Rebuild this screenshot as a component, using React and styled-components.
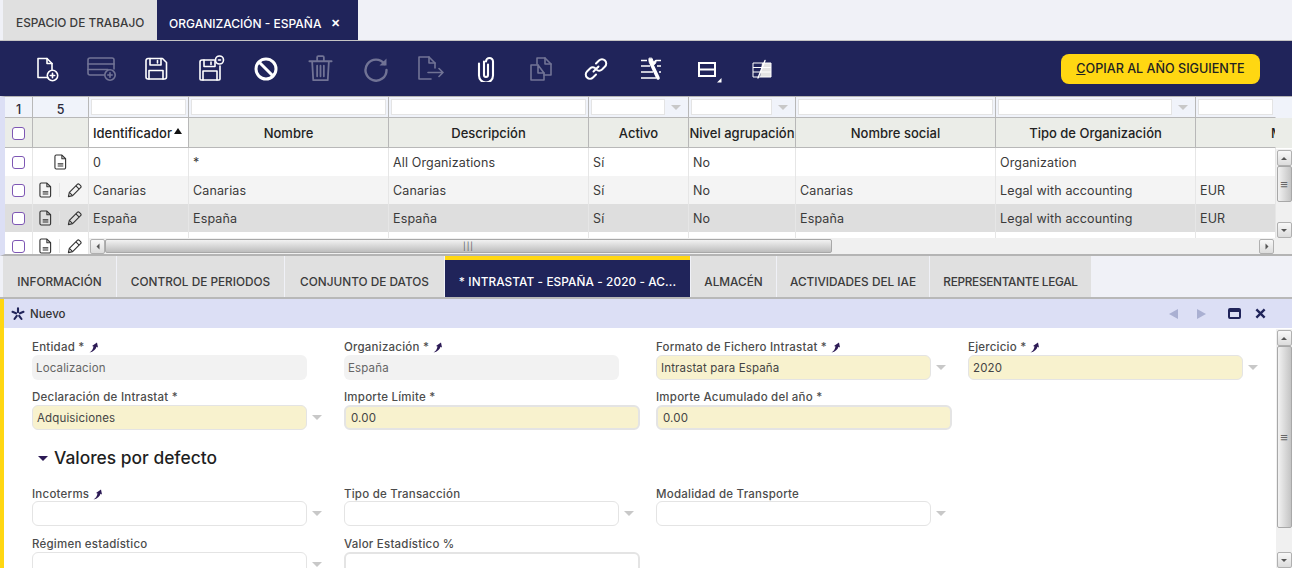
import React from 'react'
import styled, { createGlobalStyle } from 'styled-components'

const NAVY = '#20245a'
const FONT = 'Inter, "Open Sans", sans-serif'

const Global = createGlobalStyle`
  html, body { margin: 0; padding: 0; background: #f0f1f7; }
  body { width: 1292px; height: 568px; overflow: hidden; font-family: ${FONT}; }
  * { box-sizing: border-box; }
`

// ICONS
const Svg = ({ children, size = 26, dim, box = 26 }) => (
  <svg
    width={size}
    height={size}
    viewBox={`0 0 ${box} ${box}`}
    fill="none"
    stroke="#fff"
    strokeWidth="1.6"
    strokeLinejoin="round"
    strokeLinecap="round"
    opacity={dim ? 0.36 : 1}
    style={{ flex: 'none' }}
  >
    {children}
  </svg>
)

const PlusBadge = ({ x, y }) => (
  <>
    <circle cx={x} cy={y} r="5.2" />
    <path d={`M${x - 2.2} ${y}h4.4M${x} ${y - 2.2}v4.4`} />
  </>
)

const icons = [
  <Svg><path d="M15 21.500H5V2.500h9l5 5v6" /><path d="M14 2.500v5h5" /><PlusBadge x={19.500} y={19.500} /></Svg>,
  <Svg dim size={30} box={30}><path d="M18 21H4a2 2 0 0 1-2-2V6a2 2 0 0 1 2-2h22a2 2 0 0 1 2 2v9" /><path d="M2 10h26M2 15.500h20" /><PlusBadge x={24} y={21} /></Svg>,
  <Svg><path d="M5 2.500h14.500l4 4V21a2 2 0 0 1-2 2H5a2 2 0 0 1-2-2V4.500a2 2 0 0 1 2-2z" /><path d="M7 2.500v6.500h11V2.500M14.500 4.500v2.500" /><path d="M6 23v-8.500h14V23" /></Svg>,
  <Svg size={30} box={30}><path d="M18 6H6a2 2 0 0 0-2 2v17a1 1 0 0 0 1 1h18a1 1 0 0 0 1-1V12" /><path d="M8 6v6.500h11V6M15 8v2.500" /><path d="M7 26v-9h14v9" /><circle cx="23.500" cy="6" r="4" /><path d="M22.500 6h2" /></Svg>,
  <Svg><circle cx="13" cy="13" r="10" strokeWidth="3" /><path d="M6 6l14 14" strokeWidth="3" strokeLinecap="butt" /></Svg>,
  <Svg dim size={29} box={26}><path d="M3 6.500h20M10 6.500V3a1 1 0 0 1 1-1h4a1 1 0 0 1 1 1v3.500M5.500 6.500l1 17h13l1-17M10 10.500v9.500M13 10.500v9.500M16 10.500v9.500" /></Svg>,
  <Svg dim><path d="M21.500 8A10.500 10.500 0 1 0 23.500 14" strokeWidth="2.400" /><path d="M23.500 2.500v7h-7z" fill="#fff" stroke="none" /></Svg>,
  <Svg dim size={30} box={30}><path d="M15 25H3V3h10l6 6v5" /><path d="M13 3v6h6" /><path d="M12 18.500h15M23 14.500l4 4-4 4" /></Svg>,
  <Svg><path d="M6 7v12a7 7 0 0 0 14 0V5a3.500 3.500 0 0 0-7 0M11 5v13.500a2 2 0 0 0 4 0V8" strokeWidth="2.100" transform="translate(0 .5)" /></Svg>,
  <Svg dim><path d="M10 9H3v15h13v-7" /><path d="M9 8V2h8l6 6v11h-7" /><path d="M17 2v6h6M10 9l6 8h-6z" /></Svg>,
  <Svg><path d="M10.500 15.500l5-5" strokeWidth="2" /><path d="M13 7.500l3-3a4.200 4.200 0 0 1 6 6l-3 3a4.200 4.200 0 0 1-5 .5" strokeWidth="2" /><path d="M13 18.500l-3 3a4.200 4.200 0 0 1-6-6l3-3a4.200 4.200 0 0 1 5-.5" strokeWidth="2" /></Svg>,
  <Svg>
    <path d="M3 4.500h6M18 4.500h5M3 10h9M19 10h4M3 16h12M21 16h2M3 22h15" strokeWidth="1.300" strokeLinecap="butt" />
    <path d="M13.500 8l6.500 14" strokeWidth="3.600" strokeLinecap="round" />
    <path d="M11 2.500c-.5 3 .5 6 3 6.500s4.500-2 4-5l-2.500 2-1.500-3.500z" fill="#fff" stroke="#fff" strokeWidth="1" />
  </Svg>,
  <Svg size={34} box={34}><path d="M10 11h16v13H10zM10 17.500h16" strokeWidth="2" strokeLinejoin="miter" strokeLinecap="butt" /><path d="M32.500 26v4.500H28z" fill="#fff" stroke="none" /></Svg>,
  <Svg size={24} box={24}><path d="M13 6h9v14H11z" fill="#e4e4e4" stroke="none" /><path d="M4 6h18v14H4zM4 10.500h18M4 15h18" strokeWidth="1" strokeLinecap="butt" /><path d="M16 3.500L9 21" strokeWidth="1.400" /></Svg>,
]

const Doc = () => (
  <svg width="13" height="16" viewBox="0 0 14 17" fill="none" stroke="#333" strokeWidth="1.200" strokeLinejoin="round" style={{ flex: 'none' }}>
    <path d="M2.500 1h6l4 4v9.500a1.500 1.500 0 0 1-1.500 1.500H2.500A1.500 1.500 0 0 1 1 14.500v-12A1.500 1.500 0 0 1 2.500 1z" />
    <path d="M8.500 1v4h4" />
    <path d="M4 10.500h6M4 12.800h6" strokeWidth="1.200" />
  </svg>
)

const Pencil = () => (
  <svg width="15" height="15" viewBox="0 0 16 16" fill="none" stroke="#333" strokeWidth="1.200" strokeLinejoin="round" style={{ flex: 'none' }}>
    <path d="M1.500 14.500l1-4.500 8.500-8.500a1.500 1.500 0 0 1 2.100 0l1.400 1.400a1.500 1.500 0 0 1 0 2.100L6 13.500z" />
    <path d="M2.500 10l3.500 3.500M9.500 3l3.500 3.500" />
  </svg>
)

const Pin = () => (
  <svg width="11" height="11" viewBox="0 0 10 11">
    <path d="M1 10.500C3.500 9 4.500 7 5 4.500L3.500 4 8.500.5 9.500 5.500 8 4.800C7.200 7.500 5 9.800 1 10.500z" fill="#2c1a55" />
  </svg>
)

const Star = () => (
  <svg width="14" height="14" viewBox="0 0 14 14" stroke={NAVY} strokeWidth="2.100" strokeLinecap="round">
    <path d="M7 1.200v4M1.500 4.800L5 6.300M12.500 4.800L9 6.300M3.500 12L5.800 8.800M10.500 12L8.200 8.800" />
  </svg>
)

// TOP TABS
const Page = styled.div`
  width: 1292px;
  height: 568px;
  overflow: hidden;
  display: flex;
  flex-direction: column;
  color: #333;
`
const TopTabs = styled.div`
  display: flex;
  height: 41px;
  padding-left: 3px;
  border-bottom: 1px solid #c4c4c4;
`
const TopTab = styled.div`
  display: flex;
  align-items: center;
  gap: 10px;
  height: 40px;
  width: ${p => p.$w}px;
  padding: 6px 0 0 ${p => (p.$active ? 12 : 13)}px;
  font-size: ${p => (p.$active ? 12 : 11.85)}px;
  font-weight: 500;
  background: ${p => (p.$active ? NAVY : '#e0e0e0')};
  color: ${p => (p.$active ? '#fff' : '#3b3b3b')};
`
const CloseMark = styled.span`
  font-size: 11px;
  font-weight: 700;
`
const Toolbar = styled.div`
  display: flex;
  align-items: center;
  height: 55px;
  padding: 0 32px 0 18px;
  background: ${NAVY};
`
const ToolBtn = styled.div`
  width: 55px;
  height: 30px;
  display: flex;
  align-items: center;
  justify-content: center;
`
const CopyBtn = styled.button`
  margin-left: auto;
  width: 199px;
  height: 30px;
  border: 0;
  border-radius: 8px;
  background: #ffd712;
  color: #222;
  font-family: ${FONT};
  font-size: 12.600px;
  font-weight: 500;
  padding: 0;
`

// GRID
const widths = [28, 56, 100, 200, 200, 100, 107, 200, 200, 80]

const GridPanel = styled.div`
  position: relative;
  height: 160px;
  overflow: hidden;
  background: #fff;
  border-left: 5px solid #dcdff5;
  border-bottom: 2px solid #b4b4b4;
  border-top: 1px solid #b4b4b4;
`
const Row = styled.div`
  display: flex;
  height: ${p => p.$h}px;
  background: ${p => p.$bg || '#fff'};
`
const Cell = styled.div`
  flex: none;
  width: ${p => p.$w}px;
  height: 100%;
  display: flex;
  align-items: center;
  justify-content: ${p => (p.$center ? 'center' : 'flex-start')};
  gap: ${p => p.$gap || 0}px;
  padding-left: ${p => (p.$center ? 0 : 4)}px;
  border-right: 1px solid ${p => p.$line || '#e6e6e6'};
  font-size: 12.500px;
  letter-spacing: .14px;
  white-space: nowrap;
  overflow: hidden;
  color: #3a3a3a;
`
const HeadCell = styled(Cell)`
  border-right-color: ${p => p.$line || '#b8b8b8'};
  border-bottom: 1px solid #b8b8b8;
  background: ${p => (p.$sorted ? '#fff' : '#ebede8')};
  color: #222;
  font-size: 13px;
  letter-spacing: 0;
  font-weight: 500;
  padding-top: 1px;
  justify-content: ${p => (p.$sorted || p.$pad ? 'flex-start' : 'center')};
  padding-left: ${p => p.$pad || (p.$sorted ? 4 : 0)}px;
`
const FilterCell = styled.div`
  flex: none;
  width: ${p => p.$w}px;
  height: 100%;
  display: flex;
  padding: ${p => (p.$text ? '4px 0 0' : '2px')};
  border-right: 1px solid ${p => p.$line || '#b8b8b8'};
  border-bottom: 1px solid #b8b8b8;
  font-size: 12.500px;
  font-weight: 500;
  align-items: center;
  justify-content: center;
  color: #2a2a3a;
`
const FilterBox = styled.div`
  flex: 1;
  height: 100%;
  background: #fff;
  border: 1px solid #e4e4e4;
`
const Caret = styled.span`
  flex: none;
  width: 0;
  height: 0;
  border-left: ${p => p.$s || 4}px solid transparent;
  border-right: ${p => p.$s || 4}px solid transparent;
  border-top: ${p => p.$s || 4}px solid ${p => p.$c || '#c8c8c8'};
  margin: ${p => p.$m || '0 5px 0 6px'};
  transform: rotate(${p => p.$rot || 0}deg);
`
const Check = styled.span`
  width: 13px;
  height: 13px;
  border: 1.500px solid #7e57b4;
  border-radius: 3px;
  background: #fff;
`
const SortUp = styled.span`
  width: 0;
  height: 0;
  margin: 0 0 5px 2px;
  border-left: 4px solid transparent;
  border-right: 4px solid transparent;
  border-bottom: 6px solid #111;
`
const Divider = styled.span`
  width: 1px;
  height: 14px;
  background: #e4e4e4;
`
const HScroll = styled.div`
  position: absolute;
  left: 84px;
  right: 0;
  bottom: 0;
  height: 16px;
  display: flex;
  align-items: center;
  padding: 0 18px 0 1px;
  background: #f0f0f0;
`
const ScrollBtn = styled.div`
  flex: none;
  width: ${p => p.$w || 15}px;
  height: ${p => p.$h || 15}px;
  display: flex;
  align-items: center;
  justify-content: center;
  background: linear-gradient(#f8f8f8, #dcdcdc);
  border: 1px solid #b0b0b0;
  border-radius: 2px;
`
const HThumb = styled.div`
  width: 727px;
  height: 14px;
  background: linear-gradient(#f2f2f2, #bdbdbd);
  border: 1px solid #a8a8a8;
  border-radius: 2px;
  display: flex;
  align-items: center;
  justify-content: center;
  font-size: 8px;
  color: #555;
  letter-spacing: 1px;
`
const VScroll = styled.div`
  position: absolute;
  top: ${p => p.$top}px;
  right: 0;
  bottom: ${p => p.$bottom}px;
  width: 16px;
  background: #f0f0f0;
  display: flex;
  flex-direction: column;
  align-items: center;
  padding-top: 1px;
`
const VThumb = styled.div`
  width: 15px;
  height: ${p => p.$h}px;
  background: linear-gradient(90deg, #f2f2f2, #c4c4c4);
  border: 1px solid #a8a8a8;
  border-radius: 2px;
  display: flex;
  align-items: center;
  justify-content: center;
  font-size: 13px;
  color: #666;
`
const Spacer = styled.div`
  flex: 1;
`

// SUB TABS
const SubTabs = styled.div`
  display: flex;
  height: 43px;
  padding-left: 3px;
  gap: 1px;
  border-bottom: 2px solid #b8b8b8;
`
const SubTab = styled.div`
  width: ${p => p.$w}px;
  height: 41px;
  display: flex;
  align-items: center;
  justify-content: center;
  font-size: 11.800px;
  letter-spacing: ${p => p.$ls || 0}px;
  font-weight: 500;
  background: ${p => (p.$active ? NAVY : '#e0e0e0')};
  color: ${p => (p.$active ? '#fff' : '#3b3b3b')};
  border-top: ${p => (p.$active ? '4px solid #ffd712' : '0')};
  padding-top: ${p => (p.$active ? 7 : 11)}px;
`

// FORM
const FormPanel = styled.div`
  position: relative;
  flex: 1;
  border-left: 4px solid #ffd712;
  background: #fff;
  overflow: hidden;
`
const FormHeader = styled.div`
  display: flex;
  align-items: center;
  height: 29px;
  padding: 0 26px 0 7px;
  gap: 5px;
  background: #dcdff5;
  font-size: 11.500px;
  font-weight: 500;
  color: #333;
`
const NavArrow = styled.span`
  width: 0;
  height: 0;
  border-top: 5px solid transparent;
  border-bottom: 5px solid transparent;
  ${p => (p.$dir === 'left' ? 'border-right: 9px solid #aab0d2;' : 'border-left: 9px solid #aab0d2;')}
  margin-right: ${p => p.$mr}px;
`
const MaxIcon = styled.span`
  width: 13px;
  height: 11px;
  border: 2px solid ${NAVY};
  border-top-width: 4px;
  border-radius: 2px;
  margin-right: 9px;
`
const FormGrid = styled.div`
  display: grid;
  grid-template-columns: repeat(4, 312px);
  padding: 11px 0 0 28px;
`
const Field = styled.div`
  height: ${p => p.$h || 51}px;
  display: flex;
  flex-direction: column;
`
const Label = styled.div`
  height: 16px;
  display: flex;
  align-items: center;
  gap: 3px;
  font-size: 11.500px;
  letter-spacing: .23px;
  font-weight: 500;
  color: #4c4c4c;
`
const InputRow = styled.div`
  display: flex;
  align-items: center;
  margin-top: ${p => p.$mt || 0}px;
`
const Input = styled.div`
  width: ${p => p.$w || 275}px;
  height: 25px;
  display: flex;
  align-items: center;
  padding-left: ${p => (p.$kind === 'num' ? 5 : 4)}px;
  border-radius: 6px;
  font-size: 11.500px;
  letter-spacing: .15px;
  color: ${p => (p.$kind === 'ro' ? '#666' : '#444')};
  background: ${p => (p.$kind === 'ro' ? '#f2f2f2' : p.$kind === 'empty' || p.$kind === 'blank' ? '#fff' : '#f8f2ce')};
  border: ${p => {
    if (p.$kind === 'ro') return '0'
    if (p.$kind === 'num' || p.$kind === 'blank') return '2px solid #e4e4e4'
    return '1.500px solid #e4e4e4'
  }};
`
const SectionTitle = styled.div`
  grid-column: 1 / -1;
  height: 51px;
  margin-top: -5px;
  padding: 0 0 6px 6px;
  display: flex;
  align-items: center;
  gap: 6px;
  font-size: 17.400px;
  font-weight: 500;
  color: #1f1f1f;
`

const headers = ['Identificador', 'Nombre', 'Descripción', 'Activo', 'Nivel agrupación', 'Nombre social', 'Tipo de Organización', 'M']
const rows = [
  { bg: '#fff', vals: ['0', '*', 'All Organizations', 'Sí', 'No', '', 'Organization', ''], first: true },
  { bg: '#f4f4f4', vals: ['Canarias', 'Canarias', 'Canarias', 'Sí', 'No', 'Canarias', 'Legal with accounting', 'EUR'] },
  { bg: '#dedede', vals: ['España', 'España', 'España', 'Sí', 'No', 'España', 'Legal with accounting', 'EUR'] },
  { bg: '#fff', vals: ['', '', '', '', '', '', '', ''] },
]
const subTabs = [
  ['INFORMACIÓN', 113],
  ['CONTROL DE PERIODOS', 167],
  ['CONJUNTO DE DATOS', 159],
  ['* INTRASTAT - ESPAÑA - 2020 - AC...', 245, true, 0.1],
  ['ALMACÉN', 85],
  ['ACTIVIDADES DEL IAE', 152],
  ['REPRESENTANTE LEGAL', 161, false, -0.3],
]
const filterCarets = [5, 6, 8]

const FieldBox = ({ label, pin, kind, value, select, h, w, mt }) => (
  <Field $h={h}>
    <Label>
      {label}
      {pin && <Pin />}
    </Label>
    <InputRow $mt={mt}>
      <Input $kind={kind} $w={w}>{value}</Input>
      {select && <Caret $s={5} $m="0 0 0 5px" />}
    </InputRow>
  </Field>
)

const ScrollCaret = ({ rot }) => <Caret $s={3} $c="#555" $m="0" $rot={rot} />

const App = () => (
  <Page>
    <Global />
    <TopTabs>
      <TopTab $w={154}>ESPACIO DE TRABAJO</TopTab>
      <TopTab $w={201} $active>
        ORGANIZACIÓN - ESPAÑA
        <CloseMark>✕</CloseMark>
      </TopTab>
    </TopTabs>
    <Toolbar>
      {icons.map((icon, i) => (
        <ToolBtn key={i}>{icon}</ToolBtn>
      ))}
      <CopyBtn>
        <u>C</u>OPIAR AL AÑO SIGUIENTE
      </CopyBtn>
    </Toolbar>

    <GridPanel>
      <Row $h={21} $bg="#f0f3fa">
        {widths.map((w, i) => (
          <FilterCell key={i} $w={w} $text={i < 2} $line={i === 9 ? 'transparent' : undefined}>
            {i === 0 && '1'}
            {i === 1 && '5'}
            {i > 1 && <FilterBox />}
            {filterCarets.includes(i) && <Caret $s={5} />}
          </FilterCell>
        ))}
      </Row>
      <Row $h={30} $bg="#ebede8">
        <HeadCell $w={widths[0]} $center>
          <Check />
        </HeadCell>
        <HeadCell $w={widths[1]} />
        {headers.map((h, i) => (
          <HeadCell
            key={h}
            $w={widths[i + 2]}
            $sorted={i === 0}
            $pad={i === 7 ? 75 : 0}
            $line={i === 7 ? 'transparent' : undefined}
          >
            {h}
            {i === 0 && <SortUp />}
          </HeadCell>
        ))}
      </Row>
      {rows.map((r, ri) => (
        <Row key={ri} $h={28} $bg={r.bg}>
          <Cell $w={widths[0]} $center>
            <Check />
          </Cell>
          <Cell $w={widths[1]} $center $gap={r.first ? 0 : 7}>
            <Doc />
            {!r.first && <Divider />}
            {!r.first && <Pencil />}
          </Cell>
          {r.vals.map((v, i) => (
            <Cell key={i} $w={widths[i + 2]}>
              {v}
            </Cell>
          ))}
        </Row>
      ))}
      <HScroll>
        <ScrollBtn>
          <ScrollCaret rot={90} />
        </ScrollBtn>
        <HThumb>|||</HThumb>
        <Spacer />
        <ScrollBtn>
          <ScrollCaret rot={-90} />
        </ScrollBtn>
      </HScroll>
      <VScroll $top={52} $bottom={16}>
        <ScrollBtn $h={16}>
          <ScrollCaret rot={180} />
        </ScrollBtn>
        <VThumb $h={36}>≡</VThumb>
        <Spacer />
        <ScrollBtn $h={16}>
          <ScrollCaret />
        </ScrollBtn>
      </VScroll>
    </GridPanel>

    <SubTabs>
      {subTabs.map(([t, w, active, ls]) => (
        <SubTab key={t} $w={w} $active={active} $ls={ls}>
          {t}
        </SubTab>
      ))}
    </SubTabs>

    <FormPanel>
      <FormHeader>
        <Star />
        Nuevo
        <Spacer />
        <NavArrow $dir="left" $mr={14} />
        <NavArrow $dir="right" $mr={17} />
        <MaxIcon />
        <svg width="11" height="11" viewBox="0 0 12 12" stroke={NAVY} strokeWidth="2.600">
          <path d="M1.500 1.500l9 9M10.500 1.500l-9 9" />
        </svg>
      </FormHeader>
      <FormGrid>
        <FieldBox h={50} label="Entidad *" pin kind="ro" value="Localizacion" />
        <FieldBox h={50} label="Organización *" pin kind="ro" value="España" />
        <FieldBox h={50} label="Formato de Fichero Intrastat *" pin kind="req" value="Intrastat para España" select />
        <FieldBox h={50} label="Ejercicio *" pin kind="req" value="2020" select />
        <FieldBox label="Declaración de Intrastat *" kind="req" value="Adquisiciones" select />
        <FieldBox label="Importe Límite *" kind="num" value="0.00" w={296} />
        <FieldBox label="Importe Acumulado del año *" kind="num" value="0.00" w={296} />
        <div />
        <SectionTitle>
          <Caret $s={5} $c="#2c1a55" $m="2px 0 0 0" />
          Valores por defecto
        </SectionTitle>
        <FieldBox label="Incoterms" pin kind="empty" select h={50} mt={-1} />
        <FieldBox label="Tipo de Transacción" kind="empty" select h={50} mt={-1} />
        <FieldBox label="Modalidad de Transporte" kind="empty" select h={50} mt={-1} />
        <div />
        <FieldBox label="Régimen estadístico" kind="empty" select />
        <FieldBox label="Valor Estadístico %" kind="blank" w={296} />
      </FormGrid>
      <VScroll $top={30} $bottom={0}>
        <ScrollBtn $h={16}>
          <ScrollCaret rot={180} />
        </ScrollBtn>
        <VThumb $h={182}>≡</VThumb>
        <Spacer />
        <ScrollBtn $h={16}>
          <ScrollCaret />
        </ScrollBtn>
      </VScroll>
    </FormPanel>
  </Page>
)

export default App
